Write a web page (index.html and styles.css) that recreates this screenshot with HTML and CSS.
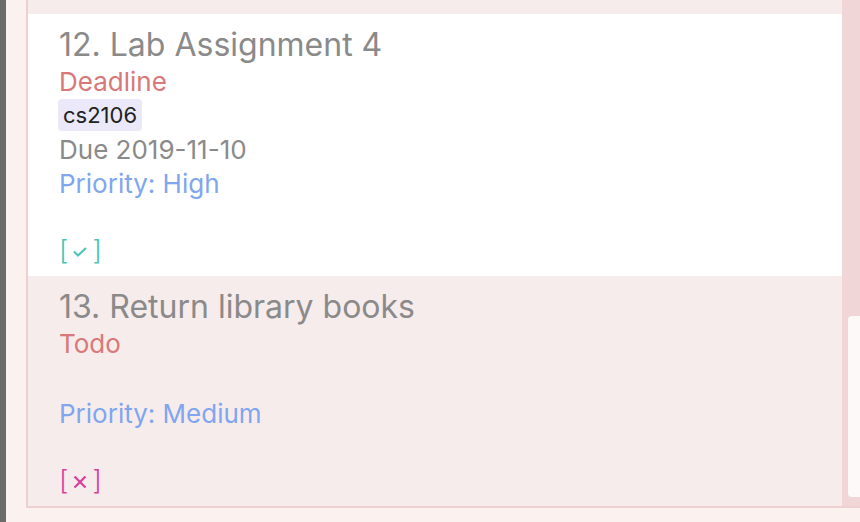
FILE: index.html
```html
<!DOCTYPE html>
<html>
<head>
<meta charset="utf-8">
<link rel="stylesheet" href="styles.css">
</head>
<body>
<div class="app">
  <div class="edge"></div>
  <div class="pane">
    <div class="listview">
      <div class="cells">
        <div class="cell odd stub"></div>
        <div class="cell even">
          <div class="title">12. Lab Assignment 4</div>
          <div class="type">Deadline</div>
          <div class="tags"><span class="tag">cs2106</span></div>
          <div class="due">Due 2019-11-10</div>
          <div class="prio">Priority: High</div>
          <div class="status done">[<svg class="mark" width="14" height="10" viewBox="0 0 14 10"><path d="M1 4.5 L5 8.5 L13 1" fill="none" stroke="currentColor" stroke-width="2"/></svg>]</div>
        </div>
        <div class="cell odd">
          <div class="title">13. Return library books</div>
          <div class="type">Todo</div>
          <div class="tags"></div>
          <div class="due">&nbsp;</div>
          <div class="prio">Priority: Medium</div>
          <div class="status open">[<svg class="mark" width="14" height="12" viewBox="0 0 14 12"><path d="M1.5 0.5 L12.5 11.5 M12.5 0.5 L1.5 11.5" fill="none" stroke="currentColor" stroke-width="2.2"/></svg>]</div>
        </div>
      </div>
      <div class="scrollbar"><div class="thumb"></div></div>
    </div>
  </div>
</div>
</body>
</html>
```

FILE: styles.css
```css
html, body {
  margin: 0;
  padding: 0;
  width: 860px;
  height: 522px;
  overflow: hidden;
  background: #fbf1ef;
  font-family: Inter, "Liberation Sans", sans-serif;
}
.app {
  display: flex;
  height: 522px;
}
.edge {
  width: 6px;
  background: #6b6b6b;
  flex: none;
}
.pane {
  flex: 1;
  padding-left: 20px;
  padding-bottom: 14px;
  display: flex;
  flex-direction: column;
}
.listview {
  flex: 1;
  display: flex;
  border-left: 2px solid #efd0d0;
  border-bottom: 2px solid #efd0d0;
  overflow: hidden;
}
.cells {
  flex: 1;
  display: flex;
  flex-direction: column;
}
.cell {
  padding: 11px 0 8px 31px;
  display: flex;
  flex-direction: column;
  flex: none;
}
.cell.odd { background: #f7ecec; }
.cell.even { background: #ffffff; }
.cell.stub { height: 14px; padding: 0; }
.cell.odd:last-child { flex: 1; }
.title {
  font-size: 32px;
  line-height: 40px;
  color: #8a8a8a;
}
.type {
  font-size: 26px;
  line-height: 34px;
  color: #d97878;
}
.tags {
  display: flex;
  min-height: 2px;
}
.tag {
  font-size: 22px;
  line-height: 32px;
  padding: 0 5px;
  margin: 0 0 2px -1px;
  background: #ebe9f9;
  border-radius: 4px;
  color: #222;
}
.due {
  font-size: 26px;
  line-height: 34px;
  color: #8a8a8a;
}
.prio {
  font-size: 26px;
  line-height: 34px;
  color: #7fa6ee;
}
.status {
  font-size: 27px;
  line-height: 34px;
  margin-top: 33px;
  font-weight: 300;
}
.status .mark {
  margin: 0 5px 0 5px;
  vertical-align: 3px;
}
.status.done { color: #48c3b6; }
.status.open { color: #d73f9f; }
.status.open .mark { vertical-align: 2px; }
.scrollbar {
  width: 18px;
  flex: none;
  background: #f0d6d7;
  position: relative;
}
.thumb {
  position: absolute;
  left: 6px;
  right: -4px;
  top: 316px;
  height: 181px;
  background: #fcfaf9;
  border-radius: 4px;
}
```
